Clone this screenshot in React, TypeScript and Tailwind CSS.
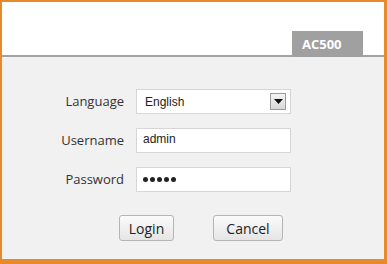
import React from 'react';

const Row = ({ label, children }: { label: string; children: React.ReactNode }) => (
    <div className="flex items-center h-[25px]">
        <label className="w-[122px] text-right text-[13px] text-[#333]">{label}</label>
        <div className="ml-[12px] w-[155px] h-[25px]">{children}</div>
    </div>
);

const App = () => {
    return (
        <main
            className="w-[387px] h-[264px] flex flex-col bg-white border-[#e8892a] border-l-2 border-t-2 border-r-[3px] border-b-[5px]"
            style={{ fontFamily: '"Open Sans", "Noto Sans", sans-serif' }}
        >
            <header className="h-[53px] flex items-end justify-end pr-[21px] border-b-2 border-[#a3a3a3] box-content">
                <div className="w-[71px] h-[26px] -mb-[2px] bg-[#a0a0a0] text-white font-bold text-[13px] leading-[26px] pl-[10px]">
                    AC500
                </div>
            </header>
            <section className="flex-1 bg-[#f1f1f1] flex flex-col pt-[32px]">
                <div className="flex flex-col gap-[14px]">
                    <Row label="Language">
                        <div className="relative w-full h-full bg-white border border-[#d6d6d6] flex items-center pl-[8px] text-[12px] text-[#222]" style={{ fontFamily: '"Liberation Sans", Arial, sans-serif' }}>
                            English
                            <div className="absolute right-[4px] top-[3px] w-[16px] h-[17px] border border-[#9a9a9a] bg-gradient-to-b from-[#f4f4f4] to-[#d8d8d8] flex items-center justify-center">
                                <svg width="9" height="5" viewBox="0 0 9 5">
                                    <polygon points="0,0 9,0 4.5,5" fill="#111" />
                                </svg>
                            </div>
                        </div>
                    </Row>
                    <Row label="Username">
                        <div className="w-full h-full bg-white border border-[#d6d6d6] flex items-center pl-[6px] pb-[3px] text-[12px] text-[#222]" style={{ fontFamily: '"Liberation Sans", Arial, sans-serif' }}>
                            admin
                        </div>
                    </Row>
                    <Row label="Password">
                        <div className="w-full h-full bg-white border border-[#d6d6d6] flex items-center pl-[6px] gap-[2px]">
                            {[0, 1, 2, 3, 4].map((i) => (
                                <span key={i} className="w-[5px] h-[5px] rounded-full bg-[#222]" />
                            ))}
                        </div>
                    </Row>
                </div>
                <div className="flex mt-[23px] pl-[117px] gap-[39px]">
                    <button className="w-[55px] h-[26px] rounded-[3px] border border-[#b5b5b5] bg-gradient-to-b from-[#fbfbfb] to-[#e5e5e5] text-[14px] text-[#222]">
                        Login
                    </button>
                    <button className="w-[70px] h-[26px] rounded-[3px] border border-[#b5b5b5] bg-gradient-to-b from-[#fbfbfb] to-[#e5e5e5] text-[14px] text-[#222]">
                        Cancel
                    </button>
                </div>
            </section>
        </main>
    );
};

export default App;
